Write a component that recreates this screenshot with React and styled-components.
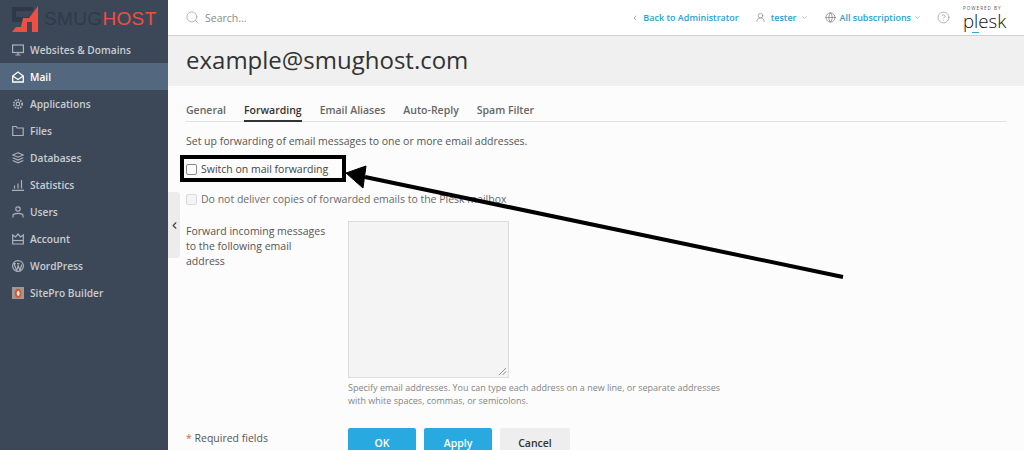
import styled, { createGlobalStyle } from 'styled-components'
import { ChevronDown, ChevronLeft, CircleHelp, Globe, Search, UserRound } from 'lucide-react'

const GlobalStyle = createGlobalStyle`
    html, body {
        margin: 0;
        height: 450px;
        overflow: hidden;
        background: #fcfcfc;
        font-family: "Open Sans", "Noto Sans", sans-serif;
    }
    * { box-sizing: border-box; }
`

const Page = styled.div`
    position: relative;
    display: flex;
    width: 1024px;
    height: 450px;
    overflow: hidden;
`

const Sidebar = styled.aside`
    width: 168px;
    flex-shrink: 0;
    background: #3c4858;
`

const Logo = styled.div`
    display: flex;
    align-items: center;
    height: 37px;
    padding-left: 12px;
    gap: 5px;
`

const LogoText = styled.span`
    font-family: "Liberation Sans", sans-serif;
    font-size: 19px;
    line-height: 1;
    letter-spacing: 0.35px;
    color: #2f3a48;
`

const LogoAccent = styled.span`
    color: #ef4e42;
`

const NavItem = styled.div`
    display: flex;
    align-items: center;
    height: 27px;
    margin-top: ${p => (p.$first ? -1 : 0)}px;
    padding-left: 12px;
    gap: 6px;
    font-size: 10.2px;
    font-weight: 600;
    color: ${p => (p.$active ? '#ffffff' : '#c9cdd2')};
    background: ${p => (p.$active ? '#53687f' : 'transparent')};
    svg { flex-shrink: 0; }
`

const Main = styled.div`
    flex: 1;
    min-width: 0;
    display: flex;
    flex-direction: column;
`

const Header = styled.header`
    display: flex;
    flex-shrink: 0;
    align-items: center;
    height: 36px;
    padding: 0 18px 0 17px;
    background: #fff;
    border-bottom: 1px solid #d0d0d0;
`

const SearchBox = styled.div`
    flex: 1;
    display: flex;
    align-items: center;
    gap: 5px;
    font-size: 10.5px;
    color: #8a8a8a;
`

const HeaderLink = styled.span`
    display: flex;
    align-items: center;
    gap: ${p => p.$gap || 4}px;
    margin-left: ${p => p.$left || 0}px;
    font-size: 9px;
    font-weight: 600;
    color: #2b9fcf;
`

const PleskMark = styled.div`
    position: relative;
    display: flex;
    flex-direction: column;
    width: 43px;
    height: 30px;
    margin: 2px 0 0 13px;
`

const PoweredBy = styled.span`
    font-size: 4.6px;
    line-height: 8px;
    letter-spacing: 1px;
    color: #555;
    white-space: nowrap;
`

const PleskWord = styled.span`
    font-family: "Open Sans", sans-serif;
    font-size: 18.6px;
    font-weight: 300;
    line-height: 18px;
    color: #111;
`

const PleskBar = styled.span`
    position: absolute;
    left: 9px;
    bottom: 1px;
    width: 7px;
    height: 1px;
    background: #28aae0;
`

const TitleBar = styled.div`
    flex-shrink: 0;
    height: 50px;
    padding: 5px 18px 0;
    background: #f0f0f0;
`

const Title = styled.h1`
    margin: 0;
    font-size: 24px;
    font-weight: 400;
    line-height: 38px;
    color: #333;
`

const Content = styled.main`
    position: relative;
    flex: 1;
    padding: 0 18px;
`

const Tabs = styled.nav`
    display: flex;
    gap: 18px;
    height: 36px;
    padding-top: 16px;
    border-bottom: 1px solid #e0e0e0;
`

const Tab = styled.span`
    height: 20px;
    font-size: 10.5px;
    font-weight: 600;
    line-height: 16px;
    color: ${p => (p.$active ? '#333' : '#666')};
    border-bottom: ${p => (p.$active ? '2px solid #333' : '0')};
`

const Intro = styled.p`
    margin: 11px 0 0;
    font-size: 10.5px;
    line-height: 16px;
    color: #555;
`

const CheckRow = styled.label`
    display: flex;
    align-items: center;
    gap: 4px;
    height: 16px;
    margin-top: ${p => p.$top}px;
    font-size: 10.5px;
    color: ${p => (p.$muted ? '#6a6a6a' : '#444')};
`

const Box = styled.span`
    flex-shrink: 0;
    width: 11px;
    height: 11px;
    border: 1px solid ${p => (p.$muted ? '#dcdcdc' : '#8a8a8a')};
    border-radius: 2px;
    background: ${p => (p.$muted ? '#f4f4f4' : '#fff')};
`

const FormRow = styled.div`
    display: grid;
    grid-template-columns: 162px 1fr;
    margin-top: 14px;
`

const FieldLabel = styled.div`
    width: 142px;
    padding-top: 3px;
    font-size: 10.5px;
    line-height: 15px;
    color: #555;
`

const TextArea = styled.div`
    position: relative;
    width: 161px;
    height: 157px;
    background: #f4f4f4;
    border: 1px solid #dcdcdc;
`

const Grip = styled.svg`
    position: absolute;
    right: 1px;
    bottom: 1px;
`

const Hint = styled.p`
    width: 385px;
    margin: 3px 0 0;
    font-size: 9px;
    line-height: 13px;
    color: #858585;
`

const Footer = styled.div`
    display: grid;
    grid-template-columns: 162px 1fr;
    margin-top: 21px;
`

const Required = styled.div`
    padding-top: 3px;
    font-size: 10.5px;
    color: #555;
`

const Star = styled.span`
    color: #c96a3c;
`

const Buttons = styled.div`
    display: flex;
    gap: 8px;
`

const Button = styled.button`
    width: ${p => p.$width}px;
    height: 36px;
    border: 0;
    border-radius: 2px;
    padding: 0 0 6px;
    font-family: inherit;
    font-size: 10.5px;
    font-weight: 600;
    color: ${p => (p.$primary ? '#fff' : '#333')};
    background: ${p => (p.$primary ? '#28aae0' : '#eeeeee')};
`

const Collapse = styled.div`
    position: absolute;
    left: 0;
    top: 106px;
    display: flex;
    align-items: center;
    justify-content: center;
    width: 12px;
    height: 66px;
    background: #ececec;
    border-radius: 0 3px 3px 0;
    color: #444;
`

const Highlight = styled.div`
    position: absolute;
    left: 180px;
    top: 155px;
    width: 166px;
    height: 27px;
    border: 4px solid #000;
`

const Arrow = styled.svg`
    position: absolute;
    left: 340px;
    top: 160px;
`

const icon = { fill: 'none', stroke: '#aab1b9', strokeWidth: 1.2 }

const navIcons = {
    monitor: (
        <svg width="12" height="12" viewBox="0 0 12 12" {...icon}>
            <rect x="0.6" y="1" width="10.8" height="7.5" />
            <path d="M3.5 11h5M6 8.5V11" />
        </svg>
    ),
    mail: (
        <svg width="12" height="12" viewBox="0 0 12 12" fill="none" stroke="#fff" strokeWidth="1.3">
            <path d="M.7 5 6 1l5.3 4v6H.7z" />
            <path d="M.7 5 6 8.5 11.3 5" />
        </svg>
    ),
    gear: (
        <svg width="12" height="12" viewBox="0 0 12 12" {...icon}>
            <circle cx="6" cy="6" r="1.8" />
            <circle cx="6" cy="6" r="4.2" strokeWidth="1.8" strokeDasharray="1.6 1.1" />
        </svg>
    ),
    folder: (
        <svg width="12" height="12" viewBox="0 0 12 12" {...icon}>
            <path d="M.7 1.5h3.5l1 1.5h6v7.5H.7z" />
        </svg>
    ),
    stack: (
        <svg width="12" height="12" viewBox="0 0 12 12" {...icon}>
            <path d="M6 .8 11.3 3 6 5.2.7 3z" />
            <path d="M.7 5.7 6 8l5.3-2.3M.7 8.5 6 10.8l5.3-2.3" />
        </svg>
    ),
    chart: (
        <svg width="12" height="12" viewBox="0 0 12 12" {...icon}>
            <path d="M0 11.3h12M2.5 9.5V6.5M6 9.5V4.5M9.5 9.5V1" />
        </svg>
    ),
    user: (
        <svg width="12" height="12" viewBox="0 0 12 12" {...icon}>
            <circle cx="6" cy="3" r="2.2" />
            <path d="M1 11.5V9.5C1 8 3 7.3 6 7.3s5 .7 5 2.2v2" />
        </svg>
    ),
    crown: (
        <svg width="12" height="12" viewBox="0 0 12 12" {...icon}>
            <path d="M.7 2 3.5 4 6 1l2.5 3 2.8-2v9H.7z" />
            <path d="M.7 7.5h10.6" />
        </svg>
    ),
    wordpress: (
        <svg width="12" height="12" viewBox="0 0 12 12" {...icon}>
            <circle cx="6" cy="6" r="5.4" />
            <path d="M2.2 4 4.6 10.6 6.2 5.6 8 10.6 9.8 4.5M1.8 3.6h2M5 3.6h2.4" />
        </svg>
    ),
    sitepro: (
        <svg width="12" height="12" viewBox="0 0 12 12">
            <rect width="12" height="12" fill="#9a9a9a" />
            <ellipse cx="6" cy="6.3" rx="3.4" ry="4.6" fill="#d9562b" />
            <ellipse cx="6.2" cy="6.3" rx="1.4" ry="2.6" fill="#eee" />
        </svg>
    ),
}

const navItems = [
    { label: 'Websites & Domains', icon: 'monitor' },
    { label: 'Mail', icon: 'mail', active: true },
    { label: 'Applications', icon: 'gear' },
    { label: 'Files', icon: 'folder' },
    { label: 'Databases', icon: 'stack' },
    { label: 'Statistics', icon: 'chart' },
    { label: 'Users', icon: 'user' },
    { label: 'Account', icon: 'crown' },
    { label: 'WordPress', icon: 'wordpress' },
    { label: 'SitePro Builder', icon: 'sitepro' },
]

const tabs = ['General', 'Forwarding', 'Email Aliases', 'Auto-Reply', 'Spam Filter']

function App() {
    return (
        <Page>
            <GlobalStyle />
            <Sidebar>
                <Logo>
                    <svg width="27" height="27" viewBox="0 0 27 27">
                        <path d="M0 2h21v4H4v6h15v5H0z" fill="#2f3a48" />
                        <path d="M0 27l4-5h5l2-9h6L26 1v26h-6V17h-5v10z" fill="#ef4e42" />
                    </svg>
                    <LogoText>SMUG<LogoAccent>HOST</LogoAccent></LogoText>
                </Logo>
                {navItems.map((item, i) => (
                    <NavItem key={item.label} $active={item.active} $first={i === 0}>
                        {navIcons[item.icon]}
                        {item.label}
                    </NavItem>
                ))}
            </Sidebar>

            <Main>
                <Header>
                    <SearchBox>
                        <Search size={15} color="#a0a0a0" strokeWidth={1.2} />
                        Search...
                    </SearchBox>
                    <HeaderLink>
                        <ChevronLeft size={8} color="#888" />
                        Back to Administrator
                    </HeaderLink>
                    <HeaderLink $left={16} $gap={5}>
                        <UserRound size={11} color="#888" strokeWidth={1.5} />
                        tester
                        <ChevronDown size={7} color="#888" />
                    </HeaderLink>
                    <HeaderLink $left={17} $gap={3}>
                        <Globe size={11} color="#777" strokeWidth={1.5} />
                        All subscriptions
                        <ChevronDown size={7} color="#888" />
                    </HeaderLink>
                    <HeaderLink $left={16}>
                        <CircleHelp size={13} color="#777" strokeWidth={1} />
                    </HeaderLink>
                    <PleskMark>
                        <PoweredBy>POWERED BY</PoweredBy>
                        <PleskWord>plesk</PleskWord>
                        <PleskBar />
                    </PleskMark>
                </Header>

                <TitleBar>
                    <Title>example@smughost.com</Title>
                </TitleBar>

                <Content>
                    <Tabs>
                        {tabs.map((tab) => (
                            <Tab key={tab} $active={tab === 'Forwarding'}>{tab}</Tab>
                        ))}
                    </Tabs>
                    <Intro>Set up forwarding of email messages to one or more email addresses.</Intro>
                    <CheckRow $top={12}><Box />Switch on mail forwarding</CheckRow>
                    <CheckRow $top={14} $muted><Box $muted />Do not deliver copies of forwarded emails to the Plesk mailbox</CheckRow>
                    <FormRow>
                        <FieldLabel>Forward incoming messages to the following email address</FieldLabel>
                        <div>
                            <TextArea>
                                <Grip width="9" height="9" viewBox="0 0 9 9" stroke="#777" strokeWidth="0.8">
                                    <path d="M1 8 8 1M4.5 8 8 4.5" />
                                </Grip>
                            </TextArea>
                            <Hint>Specify email addresses. You can type each address on a new line, or separate addresses with white spaces, commas, or semicolons.</Hint>
                        </div>
                    </FormRow>
                    <Footer>
                        <Required><Star>*</Star> Required fields</Required>
                        <Buttons>
                            <Button $primary $width={68}>OK</Button>
                            <Button $primary $width={68}>Apply</Button>
                            <Button $width={70}>Cancel</Button>
                        </Buttons>
                    </Footer>
                    <Collapse><ChevronLeft size={11} strokeWidth={2.5} /></Collapse>
                </Content>
            </Main>

            <Highlight />
            <Arrow width="510" height="125" viewBox="0 0 510 125">
                <path d="M503 117 25 17" stroke="#000" strokeWidth="4" fill="none" />
                <path d="M6 13 26 6 23 28z" fill="#000" stroke="#000" strokeWidth="1" />
            </Arrow>
        </Page>
    )
}

export default App
